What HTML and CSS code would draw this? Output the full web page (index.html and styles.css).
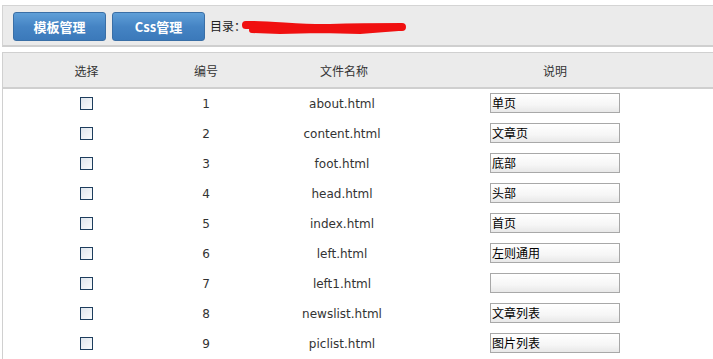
FILE: index.html
```html
<!DOCTYPE html>
<html>
<head>
<meta charset="utf-8">
<link rel="stylesheet" href="styles.css">
</head>
<body>
<div class="page">
  <div class="toolbar">
    <button class="btn">模板管理</button>
    <button class="btn">Css管理</button>
    <span class="dir">目录：</span>
    <svg class="scribble" width="170" height="18" viewBox="0 0 170 18">
      <path d="M6 6 C 30 5, 60 10, 90 9 S 140 8, 162 8" stroke="#f01010" stroke-width="8" fill="none" stroke-linecap="round"/>
      <path d="M12 11 L 40 12 L 80 11 L 120 12 L 158 9" stroke="#f01010" stroke-width="6" fill="none" stroke-linecap="round"/>
    </svg>
  </div>
  <table class="list">
    <thead>
      <tr><th class="c1">选择</th><th class="c2">编号</th><th class="c3">文件名称</th><th class="c4">说明</th><th class="c5"></th></tr>
    </thead>
    <tbody>
      <tr><td><span class="cb"></span></td><td>1</td><td>about.html</td><td><span class="inp">单页</span></td><td></td></tr>
      <tr><td><span class="cb"></span></td><td>2</td><td>content.html</td><td><span class="inp">文章页</span></td><td></td></tr>
      <tr><td><span class="cb"></span></td><td>3</td><td>foot.html</td><td><span class="inp">底部</span></td><td></td></tr>
      <tr><td><span class="cb"></span></td><td>4</td><td>head.html</td><td><span class="inp">头部</span></td><td></td></tr>
      <tr><td><span class="cb"></span></td><td>5</td><td>index.html</td><td><span class="inp">首页</span></td><td></td></tr>
      <tr><td><span class="cb"></span></td><td>6</td><td>left.html</td><td><span class="inp">左则通用</span></td><td></td></tr>
      <tr><td><span class="cb"></span></td><td>7</td><td>left1.html</td><td><span class="inp"></span></td><td></td></tr>
      <tr><td><span class="cb"></span></td><td>8</td><td>newslist.html</td><td><span class="inp">文章列表</span></td><td></td></tr>
      <tr><td><span class="cb"></span></td><td>9</td><td>piclist.html</td><td><span class="inp">图片列表</span></td><td></td></tr>
    </tbody>
  </table>
</div>
</body>
</html>
```
FILE: styles.css
```css
html, body {
  margin: 0;
  padding: 0;
  background: #fff;
  overflow: hidden;
}
.page {
  padding: 5px 0 0 2px;
  width: 740px;
  font-family: "DejaVu Sans", "Noto Sans CJK SC", sans-serif;
  font-size: 12px;
  color: #333;
}
.toolbar {
  box-sizing: border-box;
  height: 42px;
  border: 1px solid #d4d4d4;
  border-bottom: 2px solid #cfcfcf;
  background: #ebebeb;
  display: flex;
  align-items: center;
  padding: 0 0 0 10px;
  gap: 6px;
}
.btn {
  width: 93px;
  height: 29px;
  border: 1px solid #3a6fa6;
  border-radius: 3px;
  background: linear-gradient(#5f9fd8, #4584c4 50%, #3b79ba);
  color: #fff;
  font-family: "Noto Sans CJK SC", sans-serif;
  font-weight: bold;
  font-size: 13px;
  padding: 0;
  margin-top: 1px;
}
.dir {
  font-family: "Noto Sans CJK SC", sans-serif;
  font-size: 12px;
  color: #222;
  margin-left: -1px;
}
.scribble {
  margin-left: -12px;
  margin-top: 4px;
}
.list {
  margin-top: 5px;
  border-collapse: collapse;
  width: 740px;
  border: 1px solid #d0d0d0;
  table-layout: fixed;
}
.list th {
  height: 34px;
  background: #ebebeb;
  font-family: "Noto Sans CJK SC", sans-serif;
  font-weight: normal;
  font-size: 12px;
  color: #333;
  border-bottom: 2px solid #cfcfcf;
  padding: 0;
}
.c1 { width: 167px; }
.c2 { width: 72px; }
.c3 { width: 204px; }
.c4 { width: 218px; }
.list td {
  height: 30px;
  padding: 0;
  text-align: center;
  vertical-align: middle;
  color: #333;
}
.list td:nth-child(3) {
  padding-right: 4px;
}
.cb {
  display: inline-block;
  width: 11px;
  height: 11px;
  border: 1px solid #1e3e5e;
  background: linear-gradient(135deg, #dfe5ec, #fafbfc);
  vertical-align: middle;
  margin-top: -3px;
}
.inp {
  display: inline-block;
  box-sizing: border-box;
  width: 130px;
  height: 20px;
  border: 1px solid #a8a8a8;
  background: linear-gradient(#ffffff, #f6f6f6 60%, #e8e8e8);
  text-align: left;
  font-family: "Noto Sans CJK SC", sans-serif;
  font-size: 12px;
  line-height: 18px;
  color: #000;
  padding-left: 1px;
  vertical-align: middle;
  margin-top: -2px;
}
```
